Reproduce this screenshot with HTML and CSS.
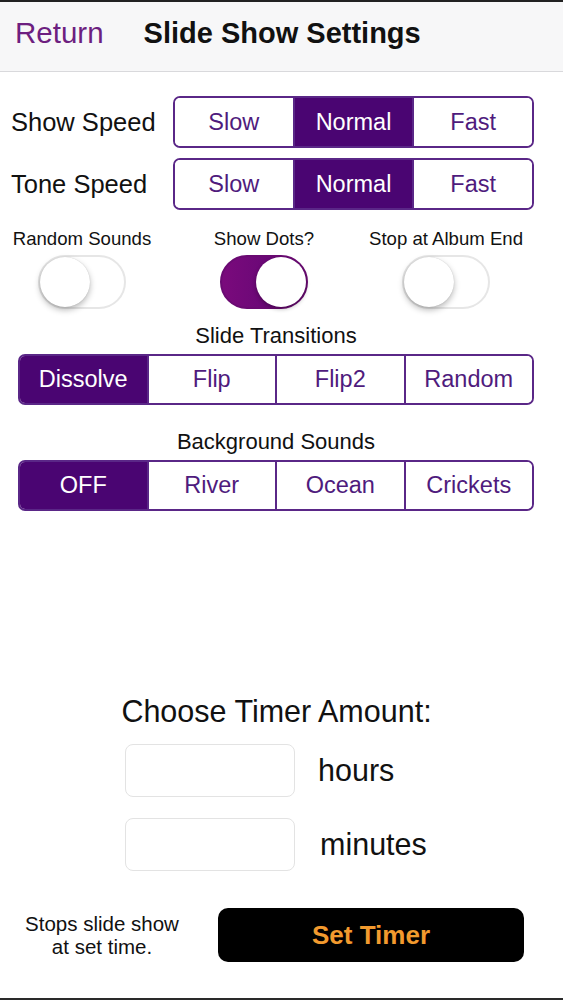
FILE: index.html
```html
<!DOCTYPE html>
<html lang="en">
<head>
    <meta charset="UTF-8">
    <meta name="viewport" content="width=device-width, initial-scale=1.0">
    <title>Slide Show Settings</title>
    <link rel="stylesheet" href="styles.css">
</head>
<body>
    <div class="screen">
        <div class="header">
            <span class="back">Return</span>
            <span class="title">Slide Show Settings</span>
        </div>

        <!-- Speed rows -->
        <div class="speed-row first">
            <div class="speed-label">Show Speed</div>
            <div class="seg speed-seg">
                <div class="seg-item">Slow</div>
                <div class="seg-item on">Normal</div>
                <div class="seg-item">Fast</div>
            </div>
        </div>
        <div class="speed-row">
            <div class="speed-label">Tone Speed</div>
            <div class="seg speed-seg">
                <div class="seg-item">Slow</div>
                <div class="seg-item on">Normal</div>
                <div class="seg-item">Fast</div>
            </div>
        </div>

        <!-- Switches -->
        <div class="switches">
            <div class="switch-col">
                <div class="switch-label">Random Sounds</div>
                <div class="toggle"><div class="knob"></div></div>
            </div>
            <div class="switch-col">
                <div class="switch-label">Show Dots?</div>
                <div class="toggle on"><div class="knob"></div></div>
            </div>
            <div class="switch-col">
                <div class="switch-label">Stop at Album End</div>
                <div class="toggle"><div class="knob"></div></div>
            </div>
        </div>

        <div class="section">
            <div class="section-title">Slide Transitions</div>
            <div class="seg wide-seg">
                <div class="seg-item on">Dissolve</div>
                <div class="seg-item">Flip</div>
                <div class="seg-item">Flip2</div>
                <div class="seg-item">Random</div>
            </div>
        </div>

        <div class="section second">
            <div class="section-title">Background Sounds</div>
            <div class="seg wide-seg">
                <div class="seg-item on">OFF</div>
                <div class="seg-item">River</div>
                <div class="seg-item">Ocean</div>
                <div class="seg-item">Crickets</div>
            </div>
        </div>

        <!-- Timer -->
        <div class="timer">
            <div class="timer-title">Choose Timer Amount:</div>
            <div class="timer-row">
                <input class="timer-input" type="text">
                <span class="timer-unit">hours</span>
            </div>
            <div class="timer-row second">
                <input class="timer-input" type="text">
                <span class="timer-unit min">minutes</span>
            </div>
        </div>

        <div class="timer-foot">
            <div class="note">Stops slide show<br>at set time.</div>
            <button class="set-btn">Set Timer</button>
        </div>
    </div>
</body>
</html>
```

FILE: styles.css
```css
body {
    margin: 0;
    background: #fff;
    font-family: "Liberation Sans", Arial, sans-serif;
    color: #111;
}
.screen {
    width: 563px;
    height: 1000px;
    box-sizing: border-box;
    border-top: 2px solid #222;
    border-bottom: 2px solid #2a2a2a;
    overflow: hidden;
}
.header {
    height: 62px;
    padding: 0 0 7px 15px;
    background: #f7f7f8;
    border-bottom: 1px solid #d9d9dc;
    display: flex;
    align-items: center;
    gap: 40px;
}
.back {
    font-size: 29.5px;
    color: #6d1f80;
}
.title {
    font-size: 29px;
    font-weight: bold;
    color: #111;
}

/* segmented controls */
.seg {
    display: flex;
    height: 52px;
    box-sizing: border-box;
    border: 2px solid #5a2787;
    border-radius: 7px;
    overflow: hidden;
}
.seg-item {
    flex: 1;
    display: flex;
    align-items: center;
    justify-content: center;
    font-size: 23.5px;
    color: #4f1b7d;
    background: #fff;
}
.seg-item + .seg-item {
    border-left: 2px solid #5a2787;
}
.seg-item.on {
    background: #4a0572;
    color: #fff;
}

.speed-row {
    display: flex;
    align-items: center;
    margin-top: 10px;
}
.speed-row.first {
    margin-top: 24px;
}
.speed-label {
    width: 162px;
    padding-left: 11px;
    font-size: 25.5px;
    color: #111;
}
.speed-seg {
    width: 361px;
}

/* switches */
.switches {
    display: grid;
    grid-template-columns: 164px 200px 164px;
    margin-top: 18px;
}
.switch-col {
    display: flex;
    flex-direction: column;
    align-items: center;
}
.switch-label {
    font-size: 18.6px;
    line-height: 22px;
    color: #111;
}
.toggle {
    width: 88px;
    height: 54px;
    margin-top: 5px;
    box-sizing: border-box;
    border: 2px solid #e6e6e6;
    border-radius: 27px;
    background: #fff;
    display: flex;
    align-items: center;
}
.knob {
    width: 50px;
    height: 50px;
    border-radius: 50%;
    background: #fff;
    box-shadow: 0 3px 6px rgba(0, 0, 0, 0.28), 0 0 1px rgba(0, 0, 0, 0.2);
}
.toggle.on {
    border-color: #6a0a72;
    background: linear-gradient(to right, #7a0a7c, #5d0672);
    justify-content: flex-end;
}
.toggle.on .knob {
    box-shadow: 0 2px 4px rgba(0, 0, 0, 0.3);
}

/* transitions + sounds */
.section {
    padding: 0 29px 0 18px;
    margin-top: 14px;
}
.section.second {
    margin-top: 24px;
}
.section-title {
    text-align: center;
    font-size: 22px;
    line-height: 26px;
    margin-bottom: 5px;
    color: #111;
}
.wide-seg {
    height: 51px;
}

/* timer */
.timer {
    margin-top: 183px;
}
.timer-title {
    text-align: center;
    padding-right: 10px;
    font-size: 30.5px;
    line-height: 34px;
    color: #111;
}
.timer-row {
    display: flex;
    align-items: center;
    margin-top: 16px;
    padding-left: 125px;
}
.timer-row.second {
    margin-top: 21px;
}
.timer-input {
    width: 170px;
    height: 53px;
    box-sizing: border-box;
    border: 1px solid #e3e3e3;
    border-radius: 8px;
    background: #fff;
    outline: none;
}
.timer-unit {
    margin-left: 23px;
    font-size: 30.5px;
    color: #111;
}
.timer-unit.min {
    margin-left: 25px;
}
.timer-foot {
    display: flex;
    align-items: center;
    margin-top: 37px;
}
.note {
    width: 204px;
    text-align: center;
    font-size: 20.5px;
    line-height: 23px;
    color: #111;
}
.set-btn {
    margin-left: 14px;
    width: 306px;
    height: 54px;
    border: none;
    border-radius: 10px;
    background: #000;
    color: #f29a2e;
    font-family: "Liberation Sans", Arial, sans-serif;
    font-size: 26px;
    font-weight: bold;
}
```
